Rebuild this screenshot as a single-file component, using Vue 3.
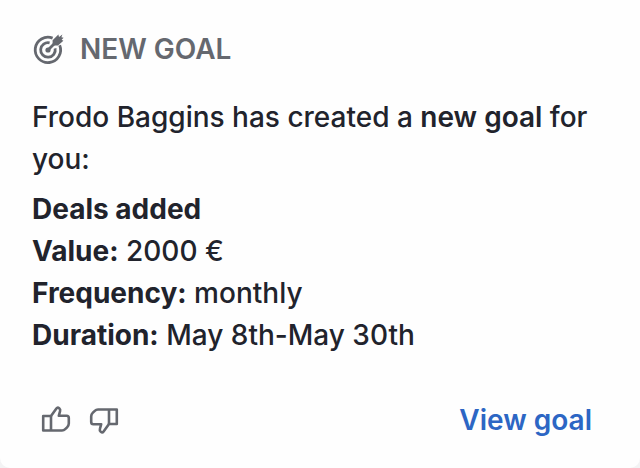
<template>
  <div class="goal-card">
    <div class="card-header">
      <svg class="goal-icon" viewBox="0 0 32 32" fill="none" stroke="currentColor">
        <path d="M20.6 5.1A12.7 12.7 0 1 0 27.7 12.2" stroke-width="2.8" />
        <path d="M17.6 9.8A7.3 7.3 0 1 0 23.1 15.4" stroke-width="2.8" />
        <circle class="filled" cx="16" cy="17" r="2.6" />
        <path d="M16 17L24 9" stroke-width="2.8" />
        <path class="filled" d="M20.6 12.4V7.2L26.4 1.6L27 4L30.4 1.4L29.4 4.2L31.6 4.7L29.6 6.7L31.4 7.7L26 12.4Z" />
      </svg>
      <span class="title">NEW GOAL</span>
    </div>
    <p class="message">Frodo Baggins has created a <b>new goal</b> for you:</p>
    <div class="details">
      <div class="detail-name">{{ goal.name }}</div>
      <div v-for="item in goal.items" :key="item.label">
        <strong>{{ item.label }}:</strong> {{ item.value }}
      </div>
    </div>
    <div class="card-footer">
      <div class="reactions">
        <button class="icon-button" aria-label="Like">
          <svg viewBox="0 0 32 32" class="thumb">
            <path d="M3.2 12H11L16.4 4.6Q17.6 3 19.2 4.2Q20.6 5.4 20.1 7L18.8 11.8H26.6Q28.8 11.8 28.8 14V19.6C28.8 21.2 28.2 22.2 27.1 23.3L25.2 25.2C24.2 26.2 23.4 26.5 22 26.5H3.2Z" />
            <path d="M11 12V26.5" />
          </svg>
        </button>
        <button class="icon-button" aria-label="Dislike">
          <svg viewBox="0 0 32 32" class="thumb thumb-down">
            <path d="M3.2 12H11L16.4 4.6Q17.6 3 19.2 4.2Q20.6 5.4 20.1 7L18.8 11.8H26.6Q28.8 11.8 28.8 14V19.6C28.8 21.2 28.2 22.2 27.1 23.3L25.2 25.2C24.2 26.2 23.4 26.5 22 26.5H3.2Z" />
            <path d="M11 12V26.5" />
          </svg>
        </button>
      </div>
      <a class="view-link" href="#">View goal</a>
    </div>
  </div>
</template>

<script setup>
const goal = {
  name: 'Deals added',
  items: [
    { label: 'Value', value: '2000 €' },
    { label: 'Frequency', value: 'monthly' },
    { label: 'Duration', value: 'May 8th-May 30th' }
  ]
};
</script>

<style>
body {
  background-color: #f3f3f4;
}
</style>

<style scoped>
.goal-card {
  box-sizing: border-box;
  width: 100%;
  height: 468px;
  padding: 28px 48px 27px 32px;
  display: flex;
  flex-direction: column;
  background-color: #fefefe;
  border-radius: 0 0 10px 10px;
  font-family: Inter, "Liberation Sans", sans-serif;
  font-size: 28px;
  line-height: 42px;
  color: #21232c;
}

.card-header {
  display: flex;
  align-items: center;
  gap: 16px;
  color: #65686f;
}

.goal-icon {
  width: 32px;
  height: 32px;
}

.goal-icon .filled {
  fill: currentColor;
  stroke: none;
}

.title {
  font-weight: 600;
}

.message {
  margin: 26px 0 8px;
  font-weight: 500;
}

.message b {
  font-weight: 600;
}

.details {
  font-weight: 500;
}

.details strong,
.detail-name {
  font-weight: 700;
}

.card-footer {
  display: flex;
  justify-content: space-between;
  align-items: center;
  margin-top: auto;
}

.reactions {
  display: flex;
  gap: 16px;
  padding-left: 8px;
}

.icon-button {
  display: flex;
  padding: 0;
  border: none;
  background: none;
  color: #65686f;
  cursor: pointer;
}

.thumb {
  width: 32px;
  height: 32px;
  fill: none;
  stroke: currentColor;
  stroke-width: 2.6;
  stroke-linejoin: round;
}

.thumb-down {
  transform: rotate(180deg);
}

.view-link {
  font-weight: 600;
  color: #2c66c4;
  text-decoration: none;
}
</style>
